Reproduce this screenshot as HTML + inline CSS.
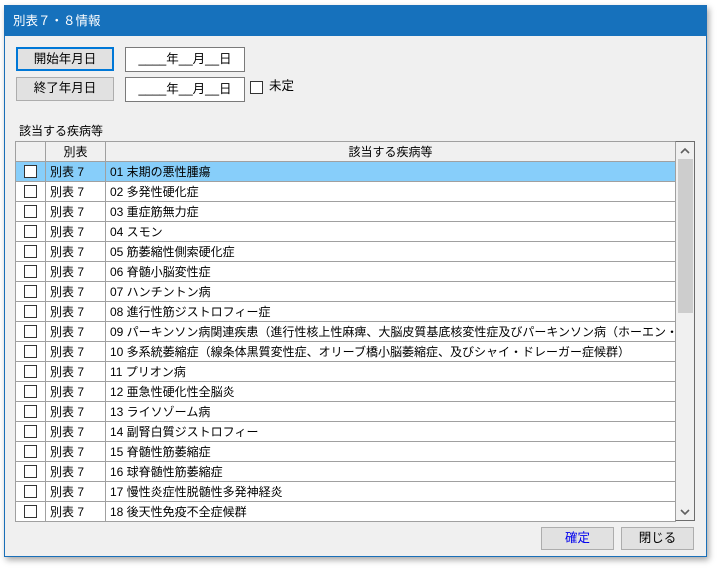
<!DOCTYPE html>
<html><head><meta charset="utf-8"><style>
*{box-sizing:border-box}
body{margin:0;width:719px;height:568px;background:#fff;font-family:"Liberation Sans","Noto Sans CJK JP",sans-serif;font-size:12px;color:#000;position:relative;overflow:hidden}
.win{position:absolute;left:4px;top:5px;width:703px;height:552px;background:#f0f0f0;border:1px solid #1a6fb8;box-shadow:2px 3px 6px rgba(0,0,0,.35)}
.title{position:absolute;left:0;top:0;width:701px;height:30px;background:#1671bc;color:#fff;font-size:12.5px;line-height:30px;padding-left:8px}
.btn{position:absolute;background:#e1e1e1;border:1px solid #adadad;text-align:center;line-height:21px;font-size:12.5px}
.inp{position:absolute;background:#fff;border:1px solid #7a7a7a;text-align:center;line-height:22px;font-size:12.5px}
.cb{position:absolute;width:13px;height:13px;border:1px solid #333;background:#fff}
.abs{position:absolute}
table{position:absolute;left:15px;top:141px;border-collapse:collapse;table-layout:fixed;width:661px}
td{border:1px solid #a0a0a0;height:20px;padding:0 0 0 4px;white-space:nowrap;overflow:hidden;background:#fff;font-size:12px}
tr.h td{background:#f0f0f0;text-align:center;padding:0}
tr.sel td{background:#87cefa}
td.c{padding:0;position:relative}
td.c span{position:absolute;left:8px;top:3px;width:13px;height:13px;border:1px solid #333;background:#fff}
</style></head><body>
<div class="win">
<div class="title">別表７・８情報</div>
<div class="btn" style="left:11px;top:41px;width:98px;height:24px;border:2px solid #0078d7;line-height:20px">開始年月日</div>
<div class="inp" style="left:120px;top:41px;width:120px;height:25px">____年__月__日</div>
<div class="btn" style="left:11px;top:71px;width:98px;height:24px">終了年月日</div>
<div class="inp" style="left:120px;top:71px;width:120px;height:25px">____年__月__日</div>
<div class="cb" style="left:245px;top:75px"></div>
<div class="abs" style="left:264px;top:73px;font-size:12.5px;line-height:15px">未定</div>
<div class="abs" style="left:14px;top:116px">該当する疾病等</div>
</div>
<table>
<colgroup><col style="width:30px"><col style="width:60px"><col></colgroup>
<tr class="h"><td></td><td>別表</td><td>該当する疾病等</td></tr>
<tr class="sel"><td class="c"><span></span></td><td>別表 7</td><td>01 末期の悪性腫瘍</td></tr>
<tr><td class="c"><span></span></td><td>別表 7</td><td>02 多発性硬化症</td></tr>
<tr><td class="c"><span></span></td><td>別表 7</td><td>03 重症筋無力症</td></tr>
<tr><td class="c"><span></span></td><td>別表 7</td><td>04 スモン</td></tr>
<tr><td class="c"><span></span></td><td>別表 7</td><td>05 筋萎縮性側索硬化症</td></tr>
<tr><td class="c"><span></span></td><td>別表 7</td><td>06 脊髄小脳変性症</td></tr>
<tr><td class="c"><span></span></td><td>別表 7</td><td>07 ハンチントン病</td></tr>
<tr><td class="c"><span></span></td><td>別表 7</td><td>08 進行性筋ジストロフィー症</td></tr>
<tr><td class="c"><span></span></td><td>別表 7</td><td>09 パーキンソン病関連疾患（進行性核上性麻痺、大脳皮質基底核変性症及びパーキンソン病（ホーエン・ヤールの重症度分類</td></tr>
<tr><td class="c"><span></span></td><td>別表 7</td><td>10 多系統萎縮症（線条体黒質変性症、オリーブ橋小脳萎縮症、及びシャイ・ドレーガー症候群）</td></tr>
<tr><td class="c"><span></span></td><td>別表 7</td><td>11 プリオン病</td></tr>
<tr><td class="c"><span></span></td><td>別表 7</td><td>12 亜急性硬化性全脳炎</td></tr>
<tr><td class="c"><span></span></td><td>別表 7</td><td>13 ライソゾーム病</td></tr>
<tr><td class="c"><span></span></td><td>別表 7</td><td>14 副腎白質ジストロフィー</td></tr>
<tr><td class="c"><span></span></td><td>別表 7</td><td>15 脊髄性筋萎縮症</td></tr>
<tr><td class="c"><span></span></td><td>別表 7</td><td>16 球脊髄性筋萎縮症</td></tr>
<tr><td class="c"><span></span></td><td>別表 7</td><td>17 慢性炎症性脱髄性多発神経炎</td></tr>
<tr><td class="c"><span></span></td><td>別表 7</td><td>18 後天性免疫不全症候群</td></tr>
</table>
<div class="abs" style="left:675px;top:141px;width:20px;height:380px;background:#f0f0f0;border:1px solid #6d6d6d;border-left:1px solid #a0a0a0"></div>
<div class="abs" style="left:678px;top:159px;width:15px;height:154px;background:#cdcdcd"></div>
<svg class="abs" style="left:679px;top:147px" width="12" height="8"><path d="M2 6 L6 2 L10 6" stroke="#606060" stroke-width="1.6" fill="none"/></svg>
<svg class="abs" style="left:679px;top:508px" width="12" height="8"><path d="M2 2 L6 6 L10 2" stroke="#606060" stroke-width="1.6" fill="none"/></svg>
<div class="btn" style="left:541px;top:527px;width:73px;height:23px;color:#0000ee">確定</div>
<div class="btn" style="left:621px;top:527px;width:73px;height:23px">閉じる</div>
</body></html>
